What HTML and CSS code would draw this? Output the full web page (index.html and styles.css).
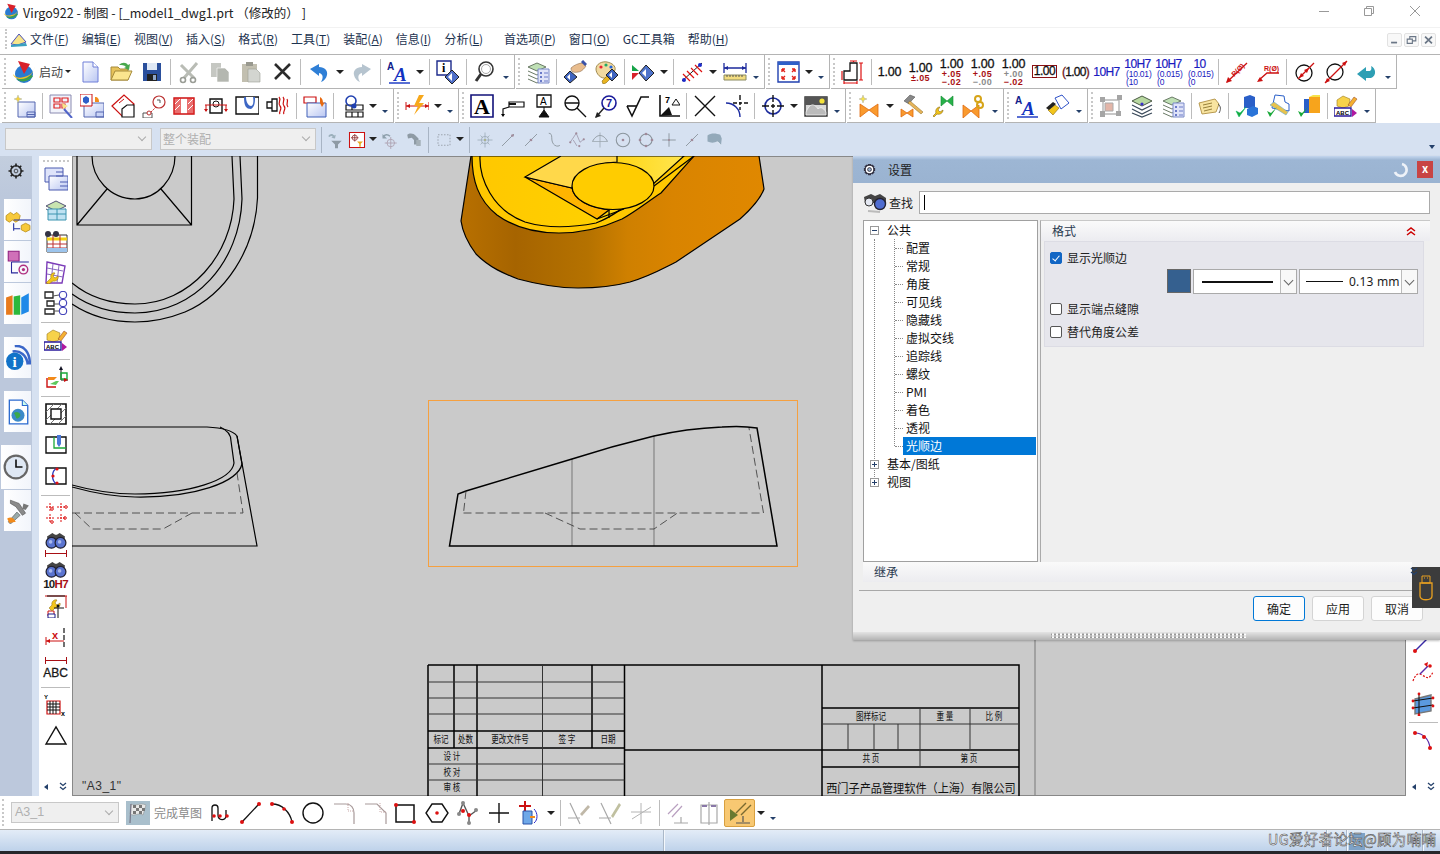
FILE: index.html
```html
<!DOCTYPE html>
<html lang="zh-CN">
<head>
    <meta charset="UTF-8">
    <title>Virgo922 - 制图</title>
    <link rel="stylesheet" href="styles.css">
</head>
<body>
    <!-- icon sprite -->
    <svg class="sprite" xmlns="http://www.w3.org/2000/svg">
        <defs>
            <linearGradient id="gBlue" x1="0" y1="0" x2="1" y2="1"><stop offset="0" stop-color="#fff"/><stop offset="1" stop-color="#b9c6f2"/></linearGradient>
            <linearGradient id="gBody" gradientUnits="userSpaceOnUse" x1="461" y1="0" x2="764" y2="0">
                <stop offset="0" stop-color="#b87000"/><stop offset=".18" stop-color="#a66400"/><stop offset=".42" stop-color="#b57200"/>
                <stop offset=".55" stop-color="#cf8000"/><stop offset=".7" stop-color="#d98400"/><stop offset="1" stop-color="#e08800"/>
            </linearGradient>
            <linearGradient id="gFloor" gradientUnits="userSpaceOnUse" x1="480" y1="0" x2="684" y2="0"><stop offset="0" stop-color="#ffc800"/><stop offset=".55" stop-color="#ffd000"/><stop offset="1" stop-color="#ffe650"/></linearGradient>
        </defs>
        <symbol id="i-logo" viewBox="0 0 24 24"><circle cx="12" cy="14" r="9" fill="#2a7bd0"/><path d="M4 19c5 4 13 3 17-3l-2-1c-4 4-9 5-15 4z" fill="#3aa245"/><path d="M1 14c1 5 8 6 13 4s9-8 8-11c1 5-5 9-10 10-5 2-9 0-11-3z" fill="#f2c318"/><path d="M6 1l12 3-6 10z" fill="#d9202a"/></symbol>
        <symbol id="i-new" viewBox="0 0 24 24"><path d="M5 2h10l5 5v15H5z" fill="url(#gBlue)" stroke="#6f7fd8"/><path d="M15 2v5h5" fill="#fff" stroke="#6f7fd8"/></symbol>
        <symbol id="i-open" viewBox="0 0 24 24"><path d="M2 20V7h7l2 2h8v11z" fill="#e6c25a" stroke="#a58a3a"/><path d="M2 20l4-9h17l-4 9z" fill="#fbe58e" stroke="#a58a3a"/><path d="M10 5c3-3 7-3 9 0l2-1-1 6-5-2 2-1c-2-2-4-2-7-2z" fill="#49a84d"/></symbol>
        <symbol id="i-save" viewBox="0 0 24 24"><path d="M3 3h18v18H3z" fill="#2a4f9c"/><path d="M7 3h10v7H7z" fill="#dfe8f5"/><path d="M7 14h10v7H7z" fill="#222"/><path d="M13 15h3v5h-3z" fill="#8fa6c8"/></symbol>
        <symbol id="i-cut" viewBox="0 0 24 24"><path d="M4 5l13 13M20 3L7 18" stroke="#b9bcb5" stroke-width="3" fill="none"/><circle cx="6" cy="20" r="2.500" fill="none" stroke="#9a9d96" stroke-width="1.600"/><circle cx="16" cy="20" r="2.500" fill="none" stroke="#9a9d96" stroke-width="1.600"/></symbol>
        <symbol id="i-copy" viewBox="0 0 24 24"><path d="M3 3h10v14H3z" fill="#c5c7c2"/><path d="M9 8h8l4 4v10H9z" fill="#b4b7b0" stroke="#fff" stroke-width=".6"/></symbol>
        <symbol id="i-paste" viewBox="0 0 24 24"><path d="M3 4h15v18H3z" fill="#c2bfb0"/><path d="M7 2h7v4H7z" fill="#99998f"/><path d="M9 9h8l4 4v9H9z" fill="#d3d5d0" stroke="#9a9d96" stroke-width=".6"/></symbol>
        <symbol id="i-x" viewBox="0 0 24 24"><path d="M5 4l15 15M20 4L5 19" stroke="#2b2b2b" stroke-width="2.600" fill="none"/></symbol>
        <symbol id="i-undo" viewBox="0 0 24 24"><path d="M3 9l9-5v3c6 0 9 4 8 8-.5 3-3 6-6 7 2-3 3-8-2-9v3z" fill="#2f7fd6"/></symbol>
        <symbol id="i-redo" viewBox="0 0 24 24"><path d="M21 9l-9-5v3C6 7 3 11 4 15c.5 3 3 6 6 7-2-3-3-8 2-9v3z" fill="#b6c4cf"/></symbol>
        <symbol id="i-find" viewBox="0 0 24 24"><circle cx="13" cy="9" r="7" fill="#fff" stroke="#333" stroke-width="1.600"/><circle cx="13" cy="9" r="4.500" fill="none" stroke="#aaa"/><path d="M3 21l5-7" stroke="#333" stroke-width="3"/></symbol>
        <symbol id="i-layers" viewBox="0 0 24 24"><path d="M2 7l9-4 9 4-9 4z" fill="#bfe0b5" stroke="#6a7a66"/><path d="M2 11l9 4 4-2M2 15l9 4 4-2M2 19l9 4 4-2" fill="none" stroke="#6a7a66"/><path d="M12 9h11v14H12z" fill="#dfe3f8" stroke="#7b8ac8"/><path d="M14 12h2v2h-2zM14 16h2v2h-2zM14 20h2v2h-2z" fill="#6a7ac8"/><path d="M18 13h4M18 17h4M18 21h4" stroke="#6a7ac8"/></symbol>
        <symbol id="i-hand" viewBox="0 0 24 24"><path d="M8 8c3-3 8-5 12-5l3 3c-2 3-5 6-8 6-4 1-7 0-7-4z" fill="#e9bd8e" stroke="#8b6a4a" stroke-width=".6"/><path d="M19 1l4 4" stroke="#3a52a8" stroke-width="3"/><path d="M7 11l7 6-7 6-6-6z" fill="#3f64c0" stroke="#222"/><path d="M7 14v6l-3-3z" fill="#fff"/></symbol>
        <symbol id="i-palette" viewBox="0 0 24 24"><path d="M2 9c0-5 6-8 11-7s9 4 8 8c-1 3-4 1-6 2-2 2 0 5-3 6-5 1-10-4-10-9z" fill="#f1d9a0" stroke="#a08a50"/><circle cx="7" cy="7" r="1.600" fill="#e23"/><circle cx="12" cy="5" r="1.600" fill="#2a6"/><circle cx="17" cy="7" r="1.600" fill="#26d"/><path d="M9 24l-1-3 3-3 2-2 3 3-4 4z" fill="#e8b420" stroke="#8a6a10" stroke-width=".6"/><path d="M18 9l6 6-6 6-6-6z" fill="#3f64c0" stroke="#222"/><path d="M18 12v6l-3-3z" fill="#fff"/></symbol>
        <symbol id="i-playd" viewBox="0 0 24 24"><path d="M1 5l7 6-7 0z" fill="#16a348"/><path d="M1 13h7l-7 7z" fill="#d8222a"/><path d="M15 5l8 8-8 8-7-8z" fill="#4f74cc" stroke="#222"/><path d="M15 9v8l-4-4z" fill="#fff"/></symbol>
        <symbol id="i-hatch" viewBox="0 0 24 24"><path d="M2 21L22 3" stroke="#222"/><path d="M3 14l7 7M7 11l7 7M11 8l7 7M15 5l7 7" stroke="#d11" stroke-width="1.200"/><circle cx="4" cy="20" r="2" fill="#1c2ac8"/><circle cx="20" cy="5" r="2" fill="#1c2ac8"/></symbol>
        <symbol id="i-ruler" viewBox="0 0 24 24"><path d="M1 8h22M1 3v10M23 3v10" stroke="#1c2a9c" stroke-width="1.300"/><path d="M1 8l4-2v4zM23 8l-4-2v4z" fill="#1c2a9c"/><path d="M1 15h22v5H1z" fill="#f2dc80" stroke="#8a8a60"/><path d="M4 15v2M7 15v2M10 15v2M13 15v2M16 15v2M19 15v2" stroke="#555"/></symbol>
        <symbol id="i-fit" viewBox="0 0 24 24"><path d="M2 2h21v20H2z" fill="#fff" stroke="#2040b0" stroke-width="1.400"/><path d="M2 2h21v3H2z" fill="#2f60c8"/><path d="M6 9l3 3M19 9l-3 3M6 19l3-3M19 19l-3-3M6 9h3M6 9v3M19 9h-3M19 9v3M6 19h3M6 19v-3M19 19h-3M19 19v-3" stroke="#e2231a" stroke-width="1.400"/></symbol>
        <symbol id="i-step" viewBox="0 0 24 24"><path d="M9 3h7v17H3v-9h6z" fill="none" stroke="#111" stroke-width="1.300"/><path d="M9 1h7M12.500 1v1M20 3v17M18 3h4M18 20h4M3 23h13M3 21v3M16 21v3M1 11v9" stroke="#d11" stroke-width="1.200"/></symbol>
        <symbol id="i-sheet" viewBox="0 0 24 24"><path d="M6 8h17v15H6z" fill="url(#gBlue)" stroke="#5566b0"/><path d="M15 18h8v5h-8zM15 20.500h8" fill="none" stroke="#5566b0"/><path d="M6 1l1 3 3 1-3 1-1 3-1-3-3-1 3-1z" fill="#f7d23a" stroke="#9aa" stroke-width=".4"/></symbol>
        <symbol id="i-views" viewBox="0 0 24 24"><path d="M1 1h21v18H1z" fill="#f1f3fb" stroke="#8a8ab0"/><path d="M5 4h6v4H5zM13 4h6v4h-6zM5 10h6v4H5zM13 10h3v4h-3z" fill="none" stroke="#d22" stroke-width="1.200"/><path d="M15 15l8 9" stroke="#5064c8" stroke-width="2"/><path d="M13 9l6 3-5 3z" fill="#f7e48a"/></symbol>
        <symbol id="i-base" viewBox="0 0 24 24"><path d="M4 9h20v14H4z" fill="url(#gBlue)" stroke="#5566b0"/><path d="M16 18h8v5h-8z" fill="none" stroke="#5566b0"/><path d="M0 0h12v12H0z" fill="#fff" stroke="#c11"/><path d="M3 4l3-2 3 2v4l-3 2-3-2z" fill="#2f5fc8"/><path d="M15 3c3 0 4 2 4 5h-4z" fill="#f28c1a"/></symbol>
        <symbol id="i-detail" viewBox="0 0 24 24"><path d="M1 12L13 1l10 9-12 12z" fill="#fff" stroke="#c11" stroke-width="1.200"/><path d="M11 15l5-4h7v12H11z" fill="#fff" stroke="#111" stroke-width="1.200"/><path d="M8 9l5-4" stroke="#c11"/></symbol>
        <symbol id="i-section" viewBox="0 0 24 24"><path d="M1 19h9v5H1z" fill="#fff" stroke="#555"/><path d="M9 18l8-8" stroke="#c33" stroke-dasharray="2 1"/><circle cx="17" cy="8" r="6" fill="#fff" stroke="#b33" stroke-width="1.200"/><path d="M15 6h3v3" stroke="#555" fill="none"/><circle cx="7" cy="19" r="2" fill="#fff" stroke="#b33"/></symbol>
        <symbol id="i-cut2" viewBox="0 0 24 24"><path d="M1 4h20v16H1z" fill="#fff" stroke="#c11" stroke-width="1.400"/><path d="M1 4h7v16H1zM14 4h7v16h-7z" fill="#d22" opacity=".65"/><path d="M2 10l5-5M2 16l5-5M15 10l5-5M15 16l5-5" stroke="#fff"/></symbol>
        <symbol id="i-half" viewBox="0 0 24 24"><path d="M6 5h12v14H6z" fill="#fff" stroke="#111" stroke-width="1.400"/><circle cx="12" cy="10" r="3" fill="none" stroke="#111"/><path d="M1 11h22M2 11v6M22 11v6" stroke="#c11"/><path d="M0 15l2 3 2-3zM20 15l2 3 2-3z" fill="#c11"/></symbol>
        <symbol id="i-break" viewBox="0 0 24 24"><path d="M1 3h23v17H1z" fill="#fff" stroke="#111" stroke-width="1.400"/><path d="M9 3c0 9 2 12 7 12 4-2 4-8 4-12z" fill="#3c66c4"/><path d="M11 3c0 6 3 9 5 9s3-4 2-9z" fill="#fff"/></symbol>
        <symbol id="i-brk" viewBox="0 0 24 24"><path d="M6 5h5v12H6zM1 8h5v6H1z" fill="#fff" stroke="#111" stroke-width="1.300"/><path d="M13 3c3 3-2 6 1 9s-2 6 0 8M17 3c3 3-2 6 1 9s-2 6 0 8M21 5c2 3-2 5 1 8" fill="none" stroke="#c11" stroke-width="1.200"/></symbol>
        <symbol id="i-move" viewBox="0 0 24 24"><path d="M1 3h12v6H1z" fill="#fff" stroke="#c11" stroke-width="1.200"/><path d="M4 9h19v14H4z" fill="url(#gBlue)" stroke="#4060b8"/><path d="M17 3c2 1 3 3 3 6l2-1-3 5-2-4z" fill="#e86a10"/></symbol>
        <symbol id="i-orient" viewBox="0 0 24 24"><path d="M6 11h17v5H6zM6 18h17v5H6zM12 18v5M18 18v5M12 11v5" fill="#fff" stroke="#111" stroke-width="1.200"/><circle cx="11" cy="7" r="5" fill="none" stroke="#2040b0" stroke-width="1.600"/><circle cx="14" cy="12" r="2.500" fill="#2040b0"/></symbol>
        <symbol id="i-dimq" viewBox="0 0 24 24"><path d="M1 12h23M1 8v8M24 8v8" stroke="#c11"/><path d="M1 12l4-2v4zM24 12l-4-2v4z" fill="#c11"/><path d="M14 1l-5 11h4l-4 9 10-12h-5l5-8z" fill="#f7a81c"/></symbol>
        <symbol id="i-weld" viewBox="0 0 24 24"><path d="M8 8h15v5H8z" fill="#fff" stroke="#111" stroke-width="1.200"/><path d="M8 10h7" stroke="#111" stroke-width="2"/><path d="M8 13l-6 2v6" fill="none" stroke="#111" stroke-width="1.200"/><path d="M0 20l2 3 2-3z"/></symbol>
        <symbol id="i-target" viewBox="0 0 24 24"><circle cx="9" cy="9" r="7" fill="#fff" stroke="#111" stroke-width="1.400"/><path d="M2 9h14M14 14l9 9" stroke="#111" stroke-width="1.400"/></symbol>
        <symbol id="i-rough" viewBox="0 0 24 24"><path d="M2 12l5 10L16 3h8" fill="none" stroke="#111" stroke-width="1.600"/><path d="M2 12h10" stroke="#111" stroke-width="1.600"/></symbol>
        <symbol id="i-cross" viewBox="0 0 24 24"><path d="M2 2l20 20M22 2L2 22" stroke="#111" stroke-width="1.400"/></symbol>
        <symbol id="i-centre" viewBox="0 0 24 24"><path d="M2 9c8 0 14 6 14 14" fill="none" stroke="#1a2aa0" stroke-width="1.400"/><path d="M16 1v5M16 8v3M16 13v3M9 9h4M15 9h3M20 9h4" stroke="#111" stroke-width="1.400"/></symbol>
        <symbol id="i-cross2" viewBox="0 0 24 24"><circle cx="12" cy="12" r="8" fill="none" stroke="#1a2a9c" stroke-width="1.600"/><path d="M12 1v7M12 10v4M12 16v7M1 12h7M10 12h4M16 12h7" stroke="#111" stroke-width="1.400"/></symbol>
        <symbol id="i-image" viewBox="0 0 24 24"><path d="M1 3h22v19H1z" fill="#d8d8d8" stroke="#333" stroke-width="1.400"/><path d="M1 3h22v8H1z" fill="#555"/><circle cx="18" cy="7" r="2.600" fill="#f4e23a"/><path d="M2 18c4-9 8-9 12-3 2-2 5-2 8 3v3H2z" fill="#bbb" stroke="#fff" stroke-width=".6"/></symbol>
        <symbol id="i-bow" viewBox="0 0 24 24"><path d="M3 10l9 6-9 7zM21 10l-9 6 9 7z" fill="#f99a2e" stroke="#e06a10" stroke-width=".8"/><path d="M6 1l1 3 3 1-3 1-1 3-1-3-3-1 3-1z" fill="#f7e34a" stroke="#999" stroke-width=".4"/></symbol>
        <symbol id="i-hammer" viewBox="0 0 24 24"><path d="M1 15l6 4-6 4zM13 15l-6 4 6 4z" fill="#f99a2e" stroke="#e06a10" stroke-width=".8"/><path d="M4 7l6-6 5 2-3 3-3 4z" fill="#888" stroke="#444" stroke-width=".5"/><path d="M10 7l13 11-2 2L8 9z" fill="#e6b45a" stroke="#8a6a20" stroke-width=".5"/></symbol>
        <symbol id="i-wrench" viewBox="0 0 24 24"><path d="M10 2l6 5 6-5v10l-6-5-6 5z" fill="#27b14a" stroke="#138a30" stroke-width=".6"/><path d="M2 22l3-3c-1-3 1-6 4-6l-2 3 2 2 3-2c0 3-3 5-6 4l-3 3z" fill="#f2c51c" stroke="#8a6a10" stroke-width=".6"/></symbol>
        <symbol id="i-bowk" viewBox="0 0 24 24"><path d="M1 11l8 6-8 7zM17 11l-8 6 8 7z" fill="#f99a2e" stroke="#e06a10" stroke-width=".8"/><circle cx="16" cy="5" r="3" fill="none" stroke="#d6a418" stroke-width="2"/><circle cx="18" cy="11" r="3" fill="none" stroke="#d6a418" stroke-width="2"/></symbol>
        <symbol id="i-txtw" viewBox="0 0 24 24"><path d="M2 16l7-5 4 3-6 7z" fill="#f2c51c" stroke="#8a6a10" stroke-width=".6"/><path d="M9 4l7-3 7 8-8 6z" fill="#fff" stroke="#2f52c8"/><path d="M0 14l7-6 3 2-7 6z" fill="#222"/></symbol>
        <symbol id="i-gridg" viewBox="0 0 24 24"><path d="M4 6h16v14H4z" fill="none" stroke="#b5b5b5" stroke-width="1.400"/><path d="M6 9h8v8H6z" fill="#e3b5a8" stroke="#aaa"/><path d="M1 17h5v6H1zM18 1h5v5h-5zM1 3h5v5H1zM17 17h5v5h-5z" fill="#a5a5a5"/></symbol>
        <symbol id="i-stack" viewBox="0 0 24 24"><path d="M2 7l10-5 10 5-10 5z" fill="#b8d8a0" stroke="#4a5a44"/><path d="M2 11l10 5 10-5M2 15l10 5 10-5M2 19l10 4 10-4" fill="none" stroke="#3a4a5a" stroke-width="1.200"/><circle cx="12" cy="10" r="1.600" fill="#3a30c8"/></symbol>
        <symbol id="i-tag" viewBox="0 0 24 24"><path d="M1 9l16-4 4 5-3 8-14 2z" fill="#f8e4a0" stroke="#b89a50"/><path d="M5 11l9-2M5 14l9-2M6 17l8-2" stroke="#97803a"/><path d="M20 10c3 2 3 6 1 9" fill="none" stroke="#555"/></symbol>
        <symbol id="i-chk1" viewBox="0 0 24 24"><path d="M9 3l6-2 5 2v11h-11z" fill="#2a5fc8"/><path d="M12 15l6-3 5 2v6l-6 3-5-2z" fill="#2a74d8"/><path d="M1 17l3 6 7-10-6 6z" fill="#18a838" stroke="#0b6" stroke-width=".5"/></symbol>
        <symbol id="i-chk2" viewBox="0 0 24 24"><path d="M9 1l9 1 1 6 4 2v7L6 14z" fill="#fff" stroke="#2a5fc8"/><path d="M4 11l4-3 14 10-2 3z" fill="#e8c24c" stroke="#6ac" stroke-width=".6"/><path d="M1 17l3 6 7-10-6 6z" fill="#18a838"/></symbol>
        <symbol id="i-chk3" viewBox="0 0 24 24"><path d="M7 5h8v14H7z" fill="#2a5fc8"/><path d="M12 3h11v16H12z" fill="#f7a41c"/><path d="M12 3l4-2h7v2z" fill="#f7e34a"/><path d="M1 17l3 6 7-10-6 6z" fill="#18a838"/></symbol>
        <symbol id="i-filter" viewBox="0 0 24 24"><path d="M3 7c2-4 6-4 8-1l2-1-1 5-5-1 2-1c-1-2-3-2-4 0z" fill="#9cb0bc"/><path d="M7 13h14l-5 5v5h-4v-5z" fill="#8e9aa4"/></symbol>
        <symbol id="i-filterr" viewBox="0 0 24 24"><path d="M2 2h20v20H2z" fill="#fff" stroke="#c11" stroke-width="1.400"/><circle cx="9" cy="9" r="3.500" fill="none" stroke="#822"/><path d="M9 4v10M4 9h10" stroke="#822"/><path d="M12 14h8l-3 3v4h-2v-4z" fill="#e8a820"/></symbol>
        <symbol id="i-fback" viewBox="0 0 24 24"><path d="M3 8c2-4 6-4 9-1" fill="none" stroke="#8ea0ac" stroke-width="2"/><path d="M2 4v6h6z" fill="#8ea0ac"/><circle cx="13" cy="16" r="5" fill="none" stroke="#a899a8"/><path d="M13 8v16M5 16h16" stroke="#a899a8"/></symbol>
        <symbol id="i-boot" viewBox="0 0 24 24"><path d="M3 5c3-3 9-2 11 1l4 4v8h-6v-6l-3-3-5 1z" fill="#8e9aa4"/><path d="M15 12h6v8h-6z" fill="#a5b0b8"/></symbol>
        <symbol id="i-rect" viewBox="0 0 24 24"><path d="M4 5h16v14H4z" fill="none" stroke="#8a9098" stroke-dasharray="2 2"/></symbol>
        <symbol id="i-snapc" viewBox="0 0 24 24"><circle cx="12" cy="12" r="5" fill="none" stroke="#9aa8b4"/><path d="M12 2v20M2 12h20M6 6l3 3M18 6l-3 3M6 18l3-3M18 18l-3-3" stroke="#9aa8b4"/><circle cx="12" cy="12" r="1.400" fill="#a8b080"/></symbol>
        <symbol id="i-snapl" viewBox="0 0 24 24"><path d="M4 20L20 4" stroke="#8a949c" stroke-width="1.200"/><circle cx="18" cy="6" r="1.800" fill="#a08a9a"/></symbol>
        <symbol id="i-snapm" viewBox="0 0 24 24"><path d="M4 20L20 4" stroke="#8a949c" stroke-width="1.200"/><circle cx="12" cy="12" r="1.800" fill="#a08a9a"/></symbol>
        <symbol id="i-snaps" viewBox="0 0 24 24"><path d="M5 3c3 0 4 2 4 6s1 8 4 10 6 1 7 0" fill="none" stroke="#8a949c" stroke-width="1.200"/></symbol>
        <symbol id="i-snapp" viewBox="0 0 24 24"><path d="M3 15L11 3l5 12 5-4" fill="none" stroke="#9a90a4"/><path d="M7 12l5 8" stroke="#9a90a4"/><circle cx="11" cy="3" r="1.500" fill="#a08a9a"/><circle cx="3" cy="15" r="1.500" fill="#a08a9a"/><circle cx="21" cy="11" r="1.500" fill="#a08a9a"/><circle cx="15" cy="20" r="1.500" fill="#a08a9a"/></symbol>
        <symbol id="i-snapa" viewBox="0 0 24 24"><path d="M2 14c3-6 7-8 10-8s7 2 10 8" fill="none" stroke="#8a949c" stroke-width="1.200"/><path d="M12 2v20M2 14h20" stroke="#9aa4ac"/></symbol>
        <symbol id="i-snapo" viewBox="0 0 24 24"><circle cx="12" cy="12" r="9" fill="none" stroke="#8a949c" stroke-width="1.400"/><circle cx="12" cy="12" r="1.800" fill="#a08a9a"/></symbol>
        <symbol id="i-snapq" viewBox="0 0 24 24"><circle cx="12" cy="12" r="8" fill="none" stroke="#8a949c" stroke-width="1.400"/><circle cx="12" cy="4" r="1.800" fill="#a08a9a"/><circle cx="12" cy="20" r="1.800" fill="#a08a9a"/><circle cx="4" cy="12" r="1.800" fill="#a08a9a"/><circle cx="20" cy="12" r="1.800" fill="#a08a9a"/></symbol>
        <symbol id="i-snapx" viewBox="0 0 24 24"><path d="M12 3v18M3 12h18" stroke="#8a949c" stroke-width="1.200"/><circle cx="12" cy="12" r="1.400" fill="#a08a9a"/></symbol>
        <symbol id="i-snapf" viewBox="0 0 24 24"><path d="M2 6c5-4 12-3 17-1l2 5-1 9c-2-3-3-4-5-5-4 2-9 2-13 0z" fill="#93a9ba"/><path d="M15 14l5 5" stroke="#e8eef4"/></symbol>
        <symbol id="i-dia" viewBox="0 0 24 24"><circle cx="11" cy="13" r="8" fill="none" stroke="#111" stroke-width="1.300"/><path d="M5 19L21 3" stroke="#c11" stroke-width="1.200"/><path d="M6 18l5-2-3-3zM16 8l-5 2 3 3z" fill="#c11"/></symbol>
        <symbol id="i-dia2" viewBox="0 0 24 24"><circle cx="11" cy="12" r="8" fill="none" stroke="#111" stroke-width="1.300"/><path d="M1 23L23 1" stroke="#c11" stroke-width="1.200"/><path d="M1 23l5-2-3-3zM23 1l-5 2 3 3z" fill="#c11"/></symbol>
        <symbol id="i-teal" viewBox="0 0 24 24"><path d="M2 14l9-7v4h3c2 0 3-2 2-5 5 2 6 10 0 12h-5v3z" fill="#2e9fb4"/></symbol>
        <symbol id="l-views" viewBox="0 0 24 24"><path d="M1 1h18v14H1z" fill="#dfe4fa" stroke="#4a5ab0"/><path d="M5 9h19v14H5z" fill="url(#gBlue)" stroke="#4a5ab0"/><path d="M12 5h7M12 9h7M16 15h8M16 19h8" stroke="#4a5ab0"/></symbol>
        <symbol id="l-layer" viewBox="0 0 24 24"><path d="M2 8l10-5 10 5-10 5z" fill="#c8e4b0" stroke="#557"/><path d="M2 11l10 5 10-5" fill="none" stroke="#557"/><path d="M4 11h18v11H4z" fill="#bfe2f2" stroke="#3a94b0"/><path d="M13 11v11M4 16h18" stroke="#3a94b0"/></symbol>
        <symbol id="l-table" viewBox="0 0 24 24"><path d="M3 6h20v17H3z" fill="#fff" stroke="#333"/><path d="M3 10h20" stroke="#f4d010" stroke-width="3"/><path d="M3 15h20M3 19h20M9 6v17M16 6v17" stroke="#b33"/><path d="M3 19h20v4H3z" fill="#9cc4ec"/><circle cx="4" cy="5" r="3" fill="#334"/><circle cx="12" cy="5" r="3" fill="#334"/></symbol>
        <symbol id="l-wrench" viewBox="0 0 24 24"><path d="M3 2l18 4-3 17H2z" fill="#fff" stroke="#7b3bb8" stroke-width="1.400"/><path d="M3 8l16 3M3 14l16 3M9 4L7 22M15 5l-2 18" stroke="#8a6ac0"/><path d="M2 23l5-5c-1-3 1-6 4-5l-2 3 2 2 3-2c1 3-2 6-5 5l-4 3z" fill="#f2c51c" stroke="#8a6a10" stroke-width=".5"/></symbol>
        <symbol id="l-list" viewBox="0 0 24 24"><path d="M1 1h8v6H1zM3 10h7v5H3zM1 18h9v5H1z" fill="none" stroke="#222" stroke-width="1.300"/><circle cx="19" cy="4" r="3.800" fill="#fff" stroke="#2a2ab0"/><circle cx="19" cy="12" r="3.800" fill="#fff" stroke="#2a2ab0"/><circle cx="19" cy="20" r="3.800" fill="#fff" stroke="#2a2ab0"/><path d="M9 5l6-1M10 13h5M10 20h5" stroke="#555"/></symbol>
        <symbol id="l-axes" viewBox="0 0 24 24"><path d="M17 3v12h7" fill="none" stroke="#111"/><path d="M17 1l-2 4h4z" fill="#112"/><path d="M17 8h6v6h-6z" fill="none" stroke="#18a838" stroke-width="1.400"/><path d="M4 12h9l-3 3H4z" fill="#f28a1a"/><path d="M3 13v9h9" fill="none" stroke="#c11" stroke-width="1.400"/><path d="M6 19l6-3h3l-3 4z" fill="#5cc85c"/><path d="M24 15l-4-2v4z" fill="#c11"/></symbol>
        <symbol id="l-cut" viewBox="0 0 24 24"><path d="M2 2h20v20H2z" fill="#fff" stroke="#111" stroke-width="1.600"/><path d="M2 10l8-8M2 18L18 2M6 22L22 6M14 22l8-8" stroke="#777"/><path d="M7 7h10v10H7z" fill="#fff" stroke="#111" stroke-width="1.400"/></symbol>
        <symbol id="l-slot" viewBox="0 0 24 24"><path d="M2 4h20v16H2z" fill="#fff" stroke="#111" stroke-width="1.400"/><path d="M10 4v11h12" fill="none" stroke="#18a838" stroke-width="1.300"/><path d="M13 2h4v9l-2 3-2-3z" fill="#4a78d8"/></symbol>
        <symbol id="l-curve" viewBox="0 0 24 24"><path d="M2 4h20v16H2z" fill="#fff" stroke="#111" stroke-width="1.400"/><path d="M13 4c-6 3-6 13 0 16" fill="none" stroke="#2a3ac0" stroke-width="1.300"/><circle cx="13" cy="5" r="1.600" fill="#d11"/><circle cx="9" cy="12" r="1.600" fill="#d11"/><circle cx="13" cy="19" r="1.600" fill="#d11"/></symbol>
        <symbol id="l-pat" viewBox="0 0 24 24"><path d="M6 2v8M2 6h8M17 2v8M13 6h8M6 13v8M2 17h8M17 13v8M13 17h8" stroke="#d11" stroke-dasharray="2 1"/><circle cx="8" cy="8" r="1.300" fill="none" stroke="#d11"/><circle cx="22" cy="6" r="1.300" fill="none" stroke="#d11"/><circle cx="8" cy="21" r="1.300" fill="none" stroke="#d11"/><circle cx="21" cy="17" r="1.300" fill="none" stroke="#d11"/></symbol>
        <symbol id="l-bino" viewBox="0 0 24 20"><path d="M2 5l6-4 3 2h2l3-2 6 4-1 5H3z" fill="#444"/><circle cx="7" cy="12" r="6" fill="#5a74d0" stroke="#223" stroke-width="1.400"/><circle cx="17" cy="12" r="6" fill="#5a74d0" stroke="#223" stroke-width="1.400"/><circle cx="6" cy="11" r="2" fill="#a9b8ec"/><circle cx="16" cy="11" r="2" fill="#a9b8ec"/></symbol>
        <symbol id="l-wrdim" viewBox="0 0 24 24"><path d="M1 2h22M22 2v12M4 22h6V17H4z" fill="none" stroke="#c11"/><path d="M3 2h18" stroke="#111"/><path d="M4 20h7v4H4z" fill="#fff" stroke="#1a1a8a"/><path d="M5 14l3-3c-1-3 2-6 5-5l-2 3 2 2 3-2c1 3-2 5-5 5l-3 3z" fill="#f2c51c" stroke="#8a6a10" stroke-width=".5"/><path d="M14 14v10M10 14h10" stroke="#111"/><circle cx="14" cy="12" r="1.500" fill="#111"/></symbol>
        <symbol id="l-tri" viewBox="0 0 24 24"><path d="M2 20L12 3l10 17z" fill="none" stroke="#111" stroke-width="1.400"/></symbol>
        <symbol id="d-struct" viewBox="0 0 24 24"><path d="M1 8l4-3 3 2 3-2 3 3-1 4-3 2-3-2-3 2-3-2z" fill="#f7c93a" stroke="#b58a10" stroke-width=".7"/><path d="M15 17l4-2 4 2v4l-4 2-4-2z" fill="#f7c93a" stroke="#b58a10" stroke-width=".7"/><path d="M8 15v7M8 12h16M8 20h6" stroke="#2030a0" fill="none"/></symbol>
        <symbol id="d-db" viewBox="0 0 24 24"><path d="M3 2h10v9H3z" fill="#d070b8" stroke="#902080"/><path d="M6 12v10h6M6 12h16" stroke="#2a2a9c" fill="none"/><circle cx="17" cy="19" r="4" fill="none" stroke="#b03080" stroke-width="1.300"/><circle cx="17" cy="19" r="1.500" fill="#b03080"/></symbol>
        <symbol id="d-books" viewBox="0 0 24 24"><path d="M1 6l6-2v18H1z" fill="#e87a1c"/><path d="M8 5l6-1v18H8z" fill="#2cb83c"/><path d="M15 6l7-4v17l-7 3z" fill="#1f8ae8"/></symbol>
        <symbol id="d-web" viewBox="0 0 24 24"><path d="M4 1h12l5 5v17H4z" fill="#fff" stroke="#2a6ad0" stroke-width="1.200"/><path d="M16 1v5h5" fill="#cfe" stroke="#2a6ad0"/><circle cx="12" cy="15" r="6" fill="#3c8ac8"/><path d="M8 13c3-2 5-1 6 1s-2 4-3 4-1-3-3-5z" fill="#3ca84c"/></symbol>
        <symbol id="d-clock" viewBox="0 0 24 24"><circle cx="12" cy="12" r="10.500" fill="#dfe8f4" stroke="#666" stroke-width="2"/><path d="M12 5v7h6" fill="none" stroke="#111" stroke-width="1.500"/></symbol>
        <symbol id="d-tools" viewBox="0 0 24 24"><path d="M5 2l8 3 6 9-3 2-6-8-5-3z" fill="#8a8a8a" stroke="#444" stroke-width=".5"/><path d="M3 22l8-9 3 3-9 8z" fill="#9aa" stroke="#444" stroke-width=".5"/><path d="M2 19c3-2 6-1 8 3l-6 1z" fill="#f28a1a"/><path d="M17 5l5 2-3 4-3-1z" fill="#777"/></symbol>
        <symbol id="c-gear" viewBox="0 0 24 24"><circle cx="12" cy="12" r="7" fill="none" stroke="#222" stroke-width="2"/><circle cx="12" cy="12" r="2.500" fill="none" stroke="#222"/><path d="M12 2v4M12 18v4M2 12h4M18 12h4M5 5l3 3M16 16l3 3M19 5l-3 3M8 16l-3 3" stroke="#222" stroke-width="2.200"/></symbol>
        <symbol id="b-profile" viewBox="0 0 24 24"><path d="M4 20V7c0-4 6-4 6 0v7c0 6 8 6 8 1V9" fill="none" stroke="#111" stroke-width="1.300"/><circle cx="6" cy="15" r="1.800" fill="#d11"/><circle cx="12" cy="15" r="1.800" fill="#d11"/><circle cx="19" cy="15" r="1.800" fill="#d11"/></symbol>
        <symbol id="b-line" viewBox="0 0 24 24"><path d="M3 21L20 3" stroke="#111" stroke-width="1.300"/><circle cx="3" cy="21" r="2" fill="#d11"/><circle cx="20" cy="3" r="2" fill="#d11"/></symbol>
        <symbol id="b-arc" viewBox="0 0 24 24"><path d="M2 3c10 0 18 8 20 18" fill="none" stroke="#111" stroke-width="1.300"/><circle cx="2" cy="3" r="2" fill="#d11"/><circle cx="14" cy="8" r="1.800" fill="#d11"/><circle cx="22" cy="21" r="2" fill="#d11"/></symbol>
        <symbol id="b-circle" viewBox="0 0 24 24"><circle cx="12" cy="12" r="10" fill="none" stroke="#111" stroke-width="1.400"/></symbol>
        <symbol id="b-fillet" viewBox="0 0 24 24"><path d="M2 3h12c5 0 8 4 8 9v11" fill="none" stroke="#a89a9a" stroke-width="1.200"/><path d="M16 2v8h6" fill="none" stroke="#c8a8a8" stroke-dasharray="1 1"/></symbol>
        <symbol id="b-chamfer" viewBox="0 0 24 24"><path d="M2 3h12l9 9v11" fill="none" stroke="#a89a9a" stroke-width="1.200"/><path d="M17 2v9h6" fill="none" stroke="#c8a8a8" stroke-dasharray="1 1"/></symbol>
        <symbol id="b-rect" viewBox="0 0 24 24"><path d="M2 4h18v17H2z" fill="none" stroke="#111" stroke-width="1.500"/><circle cx="2" cy="4" r="2" fill="#d11"/><circle cx="20" cy="21" r="2" fill="#d11"/></symbol>
        <symbol id="b-hex" viewBox="0 0 24 24"><path d="M7 3h10l6 9-6 9H7l-6-9z" fill="none" stroke="#111" stroke-width="1.400"/><circle cx="12" cy="12" r="1.800" fill="#d11"/></symbol>
        <symbol id="b-spline" viewBox="0 0 24 24"><path d="M3 13L7 2l6 13 8-6M13 15l0 7" fill="none" stroke="#555" stroke-width="1.400"/><circle cx="7" cy="10" r="2" fill="#d11"/><circle cx="13" cy="14" r="2" fill="#d11"/><circle cx="20" cy="9" r="2" fill="#888"/><circle cx="3" cy="13" r="2" fill="#888"/><circle cx="7" cy="2" r="2" fill="#888"/><circle cx="13" cy="22" r="2" fill="#888"/></symbol>
        <symbol id="b-plus" viewBox="0 0 24 24"><path d="M12 2v20M2 12h20" stroke="#111" stroke-width="1.400"/></symbol>
        <symbol id="b-offset" viewBox="0 0 24 24"><path d="M1 5h12M7 0v10" stroke="#c11" stroke-width="2"/><path d="M5 10h9v13H5z" fill="#6fa8e8" stroke="#2a52a8"/><path d="M16 8c4 4 4 11 0 14" fill="none" stroke="#2a2ac8"/><path d="M12 16h5" stroke="#f28a1a" stroke-width="2"/></symbol>
        <symbol id="b-trim1" viewBox="0 0 24 24"><path d="M3 2l10 21M1 17h12" stroke="#a8a8a8" stroke-width="1.200"/><path d="M13 13l8-9 2 2-8 9z" fill="#c0b8a8"/></symbol>
        <symbol id="b-trim2" viewBox="0 0 24 24"><path d="M3 2l10 21M1 17h12" stroke="#a8a8a8" stroke-width="1.200"/><path d="M13 15l8-13 2 2-8 13z" fill="#c0c0a0"/></symbol>
        <symbol id="b-trim3" viewBox="0 0 24 24"><path d="M12 2v21M2 11h20M3 18L22 6" stroke="#b4b4b4"/></symbol>
        <symbol id="b-par" viewBox="0 0 24 24"><path d="M2 13L12 3M6 16L16 5" stroke="#b9a0c0" stroke-width="1.200"/><path d="M15 16v6M8 22h14" stroke="#a8a8a8" stroke-width="1.200"/></symbol>
        <symbol id="b-sym" viewBox="0 0 24 24"><path d="M4 4h16v18H4zM12 1v24" fill="none" stroke="#a8a8a8" stroke-width="1.200"/><path d="M5 5h5M19 5h-5" stroke="#8a78a8" stroke-width="2"/></symbol>
        <symbol id="b-active" viewBox="0 0 24 24"><path d="M2 8l8 6-8 6z" fill="#6a7a30"/><path d="M8 12L18 2M13 14L23 4" stroke="#7a6a30" stroke-width="1.400"/><path d="M15 15v6M8 22h14" stroke="#555" stroke-width="1.200"/></symbol>
        <symbol id="r-dash" viewBox="0 0 24 24"><path d="M2 20c2-5 4-9 9-6s7 5 11-3" fill="none" stroke="#d11" stroke-width="1.200" stroke-dasharray="2 1.500"/><path d="M9 13l8-8" stroke="#5a2aa8" stroke-width="1.400"/><path d="M13 3l4-2-1 5z" fill="#d11"/><circle cx="19" cy="5" r="1.800" fill="#d11"/></symbol>
        <symbol id="r-line" viewBox="0 0 24 24"><path d="M4 21L17 8" stroke="#3a2aa8" stroke-width="1.400"/><path d="M1 6c4 3 8 4 12 3M17 6c2 2 3 3 6 2" fill="none" stroke="#d11" stroke-width="1.200" stroke-dasharray="2 1.500"/><circle cx="4" cy="21" r="2" fill="#d11"/></symbol>
        <symbol id="r-surf" viewBox="0 0 24 24"><path d="M4 7l16-4v16L4 22z" fill="#5b9ae0" stroke="#777" stroke-width="1.400"/><path d="M2 9l20-3M2 16l20-3M8 2v21" stroke="#111"/><circle cx="2" cy="9" r="1.400" fill="#d11"/><circle cx="22" cy="6" r="1.400" fill="#d11"/><circle cx="2" cy="16" r="1.400" fill="#d11"/><circle cx="22" cy="14" r="1.400" fill="#d11"/><circle cx="8" cy="2" r="1.400" fill="#d11"/><circle cx="8" cy="23" r="1.400" fill="#d11"/></symbol>
        <symbol id="r-arc" viewBox="0 0 24 24"><path d="M4 4c8 0 14 6 15 15" fill="none" stroke="#5a2aa8" stroke-width="1.200"/><circle cx="4" cy="4" r="2" fill="#d11"/><circle cx="13" cy="8" r="2" fill="#d11"/><circle cx="19" cy="19" r="2" fill="#d11"/></symbol>
        <symbol id="s-flag" viewBox="0 0 24 24"><path d="M0 0h24v24H0z" fill="#a9bfcc"/><path d="M5 3c5 3 9-2 15 1l-3 10c-5-3-8 2-13-1z" fill="#e8e8e8" stroke="#888" stroke-width=".5"/><path d="M7 4h3v3H7zM13 4h3v3h-3zM10 7h3v3h-3zM16 7h3v3h-3zM7 10h3v3H7zM13 10h3v3h-3z" fill="#777"/><path d="M5 3l-1 19" stroke="#778" stroke-width="1.200"/></symbol>
        <symbol id="e-bino" viewBox="0 0 24 24"><path d="M1 6l7-3 4 2 5-2 6 4v5H2z" fill="#444"/><circle cx="6" cy="11" r="4" fill="#e4e8f2" stroke="#333"/><circle cx="17" cy="13" r="5.500" fill="#4f6cd0" stroke="#223" stroke-width="1.400"/><path d="M5 20l12 1" stroke="#bbb" stroke-width="2"/></symbol>
        <symbol id="v-more" viewBox="0 0 8 10"><path d="M1 1l3 2.500L7 1M1 5l3 2.500L7 5" fill="none" stroke="#24406a" stroke-width="1.300"/></symbol>
    </svg>

    <div class="titlebar">
        <svg class="app-ic"><use href="#i-logo"/></svg>
        <span class="title-text">Virgo922 - 制图 - [_model1_dwg1.prt （修改的） ]</span>
        <div class="win-ctrls">
            <svg class="wc" viewBox="0 0 45 27"><path d="M17 12.500h10" stroke="#999" fill="none"/></svg>
            <svg class="wc" viewBox="0 0 45 27"><path d="M16.500 9.500h7v7h-7zM18.500 9.500v-2h7v7h-2" stroke="#999" fill="none"/></svg>
            <svg class="wc" viewBox="0 0 45 27"><path d="M16 7l10 10M26 7L16 17" stroke="#999" fill="none"/></svg>
        </div>
    </div>

    <div class="menubar">
        <span class="grip mini"></span>
        <svg class="menu-ic" viewBox="0 0 18 18"><path d="M1 13L9 3l7 8-8 3z" fill="#f7e48a" stroke="#4a52b8"/><path d="M1 14l15-2 1 3-16 1z" fill="#3aa0c0"/></svg>
        <div class="menu-items">
            <span>文件(<u>F</u>)</span><span>编辑(<u>E</u>)</span><span>视图(<u>V</u>)</span><span>插入(<u>S</u>)</span><span>格式(<u>R</u>)</span><span>工具(<u>T</u>)</span><span>装配(<u>A</u>)</span><span>信息(<u>I</u>)</span><span>分析(<u>L</u>)</span><span class="far">首选项(<u>P</u>)</span><span>窗口(<u>O</u>)</span><span>GC工具箱</span><span>帮助(<u>H</u>)</span>
        </div>
        <div class="mdi-btns">
            <span class="mdi"><svg viewBox="0 0 14 14"><path d="M3 10h7" stroke="#6a7686" stroke-width="2"/></svg></span>
            <span class="mdi"><svg viewBox="0 0 14 14"><path d="M2 6h6v5H2zM5 6V3h7v5H8" fill="none" stroke="#6a7686" stroke-width="1.300"/></svg></span>
            <span class="mdi"><svg viewBox="0 0 14 14"><path d="M3 3l8 8M11 3l-8 8" stroke="#6a7686" stroke-width="2"/></svg></span>
        </div>
    </div>

    <!-- top toolbar 1 -->
    <div class="toolrow">
        <div class="tgroup first">
            <span class="grip"></span>
            <span class="btn"><svg class="ic"><use href="#i-logo"/></svg></span>
            <span class="start">启动<i class="tri"></i></span>
            <span class="btn"><svg class="ic"><use href="#i-new"/></svg></span>
            <span class="btn"><svg class="ic"><use href="#i-open"/></svg></span>
            <span class="btn"><svg class="ic"><use href="#i-save"/></svg></span>
            <span class="sep"></span>
            <span class="btn"><svg class="ic"><use href="#i-cut"/></svg></span>
            <span class="btn"><svg class="ic"><use href="#i-copy"/></svg></span>
            <span class="btn"><svg class="ic"><use href="#i-paste"/></svg></span>
            <span class="btn"><svg class="ic"><use href="#i-x"/></svg></span>
            <span class="sep"></span>
            <span class="btn"><svg class="ic"><use href="#i-undo"/></svg></span>
            <span class="caret"></span>
            <span class="btn"><svg class="ic"><use href="#i-redo"/></svg></span>
            <span class="sep"></span>
            <span class="btn"><svg class="ic" viewBox="0 0 24 24"><text x="0" y="10" font-family="Liberation Sans" font-size="10" font-weight="700" fill="#10208a">A</text><text x="7" y="21" font-family="Liberation Serif" font-size="19" font-weight="700" font-style="italic" fill="#1232c0">A</text><path d="M2 23h21" stroke="#1232c0" stroke-width="1.400"/></svg></span>
            <span class="caret"></span>
            <span class="sep"></span>
            <span class="btn"><svg class="ic" viewBox="0 0 24 24"><path d="M1 1h14v14H1z" fill="#fff" stroke="#1c2a8c" stroke-width="1.400"/><text x="6" y="12" font-family="Liberation Serif" font-size="12" font-weight="700" fill="#000">i</text><path d="M16 10l7 7-7 7-7-7z" fill="#4f6fc8" stroke="#222"/><path d="M16 13v8l-4-4z" fill="#fff"/></svg></span>
            <span class="sep"></span>
            <span class="btn"><svg class="ic"><use href="#i-find"/></svg></span>
            <span class="caret sm"></span>
        </div>
        <div class="tgroup">
            <span class="grip"></span>
            <span class="btn"><svg class="ic"><use href="#i-layers"/></svg></span>
            <span class="sep"></span>
            <span class="btn"><svg class="ic"><use href="#i-hand"/></svg></span>
            <span class="btn"><svg class="ic"><use href="#i-palette"/></svg></span>
            <span class="sep"></span>
            <span class="btn"><svg class="ic"><use href="#i-playd"/></svg></span>
            <span class="caret"></span>
            <span class="sep"></span>
            <span class="btn"><svg class="ic"><use href="#i-hatch"/></svg></span>
            <span class="caret"></span>
            <span class="btn"><svg class="ic"><use href="#i-ruler"/></svg></span>
            <span class="caret sm"></span>
        </div>
        <div class="tgroup">
            <span class="grip"></span>
            <span class="btn"><svg class="ic"><use href="#i-fit"/></svg></span>
            <span class="caret"></span>
            <span class="caret sm"></span>
        </div>
        <div class="tgroup">
            <span class="grip"></span>
            <span class="btn"><svg class="ic"><use href="#i-step"/></svg></span>
            <span class="sep"></span>
            <span class="btn dim"><b>1.00</b></span>
            <span class="btn dim"><b>1.00</b><em class="red">±.05</em></span>
            <span class="btn dim"><b>1.00</b><em class="red">+.05</em><em class="red">−.02</em></span>
            <span class="btn dim"><b>1.00</b><em class="red">+.05</em><em class="gray">−.00</em></span>
            <span class="btn dim"><b>1.00</b><em class="gray">+.00</em><em class="red">−.02</em></span>
            <span class="btn dim"><b class="boxed">1.00</b></span>
            <span class="btn dim"><b class="paren"><s class="red">(</s>1.00<s class="red">)</s></b></span>
            <span class="btn dim blue"><b>10H7</b></span>
            <span class="btn dim blue"><b>10H7</b><em>(10.01)</em><em>(10</em></span>
            <span class="btn dim blue"><b>10H7</b><em>(0.015)</em><em>(0</em></span>
            <span class="btn dim blue"><b>10</b><em>(0.015)</em><em>(0</em></span>
            <span class="sep"></span>
            <span class="btn"><svg class="ic" viewBox="0 0 24 24"><path d="M2 22L22 3" stroke="#c11" stroke-width="1.300"/><path d="M1 23l6-2-4-4z" fill="#c11"/><text x="6" y="15" transform="rotate(-45 10 12)" font-family="Liberation Sans" font-size="7" font-weight="700" fill="#c11">R(Ø)</text></svg></span>
            <span class="btn"><svg class="ic" viewBox="0 0 24 24"><path d="M3 20l8-7h12" fill="none" stroke="#c11" stroke-width="1.300"/><path d="M1 22l6-1-3-4z" fill="#c11"/><text x="8" y="11" font-family="Liberation Sans" font-size="7" font-weight="700" fill="#c11">R(Ø)</text></svg></span>
            <span class="sep"></span>
            <span class="btn"><svg class="ic"><use href="#i-dia"/></svg></span>
            <span class="btn"><svg class="ic"><use href="#i-dia2"/></svg></span>
            <span class="btn"><svg class="ic"><use href="#i-teal"/></svg></span>
            <span class="caret sm"></span>
        </div>
    </div>

    <!-- top toolbar 2 -->
    <div class="toolrow">
        <div class="tgroup first">
            <span class="grip"></span>
            <span class="btn"><svg class="ic"><use href="#i-sheet"/></svg></span>
            <span class="sep"></span>
            <span class="btn"><svg class="ic"><use href="#i-views"/></svg></span>
            <span class="btn"><svg class="ic"><use href="#i-base"/></svg></span>
            <span class="btn"><svg class="ic"><use href="#i-detail"/></svg></span>
            <span class="btn"><svg class="ic"><use href="#i-section"/></svg></span>
            <span class="btn"><svg class="ic"><use href="#i-cut2"/></svg></span>
            <span class="btn"><svg class="ic"><use href="#i-half"/></svg></span>
            <span class="btn"><svg class="ic"><use href="#i-break"/></svg></span>
            <span class="btn"><svg class="ic"><use href="#i-brk"/></svg></span>
            <span class="sep"></span>
            <span class="btn"><svg class="ic"><use href="#i-move"/></svg></span>
            <span class="sep"></span>
            <span class="btn"><svg class="ic"><use href="#i-orient"/></svg></span>
            <span class="caret"></span>
            <span class="caret sm"></span>
        </div>
        <div class="tgroup">
            <span class="grip"></span>
            <span class="btn"><svg class="ic"><use href="#i-dimq"/></svg></span>
            <span class="caret"></span>
            <span class="caret sm"></span>
        </div>
        <div class="tgroup">
            <span class="grip"></span>
            <span class="btn"><svg class="ic" viewBox="0 0 24 24"><path d="M1 1h22v22H1z" fill="#fff" stroke="#12127a" stroke-width="1.600"/><text x="4" y="20" font-family="Liberation Serif" font-size="22" font-weight="700">A</text></svg></span>
            <span class="btn"><svg class="ic"><use href="#i-weld"/></svg></span>
            <span class="btn"><svg class="ic" viewBox="0 0 24 24"><path d="M5 1h14v12H5z" fill="#fff" stroke="#111" stroke-width="1.300"/><text x="8" y="11" font-family="Liberation Sans" font-size="10">A</text><path d="M12 13v3M7 23l5-7 5 7z" fill="#111" stroke="#111"/></svg></span>
            <span class="btn"><svg class="ic"><use href="#i-target"/></svg></span>
            <span class="btn"><svg class="ic" viewBox="0 0 24 24"><circle cx="15" cy="9" r="7" fill="#fff" stroke="#1a1a9a" stroke-width="1.600"/><text x="12" y="13" font-family="Liberation Sans" font-size="11" font-weight="700" fill="#1a1a9a">7</text><path d="M10 14L2 23" stroke="#222" stroke-width="1.400"/><path d="M1 24l2-6 4 4z" fill="#222"/></svg></span>
            <span class="btn"><svg class="ic"><use href="#i-rough"/></svg></span>
            <span class="btn"><svg class="ic" viewBox="0 0 24 24"><path d="M4 1v21h21" fill="none" stroke="#111" stroke-width="1.600"/><path d="M4 22l9-9 3 8z" fill="#111"/><text x="9" y="9" font-family="Liberation Sans" font-size="9" font-weight="700">7</text><path d="M16 11l4-6 4 6z" fill="#fff" stroke="#111"/></svg></span>
            <span class="sep"></span>
            <span class="btn"><svg class="ic"><use href="#i-cross"/></svg></span>
            <span class="btn"><svg class="ic"><use href="#i-centre"/></svg></span>
            <span class="sep"></span>
            <span class="btn"><svg class="ic"><use href="#i-cross2"/></svg></span>
            <span class="caret"></span>
            <span class="btn"><svg class="ic"><use href="#i-image"/></svg></span>
            <span class="caret sm"></span>
        </div>
        <div class="tgroup">
            <span class="grip"></span>
            <span class="btn"><svg class="ic"><use href="#i-bow"/></svg></span>
            <span class="caret"></span>
            <span class="btn"><svg class="ic"><use href="#i-hammer"/></svg></span>
            <span class="btn"><svg class="ic"><use href="#i-wrench"/></svg></span>
            <span class="btn"><svg class="ic"><use href="#i-bowk"/></svg></span>
            <span class="caret sm"></span>
        </div>
        <div class="tgroup">
            <span class="grip"></span>
            <span class="btn"><svg class="ic" viewBox="0 0 24 24"><text x="0" y="10" font-family="Liberation Sans" font-size="10" font-weight="700" fill="#10208a">A</text><text x="7" y="21" font-family="Liberation Serif" font-size="19" font-weight="700" font-style="italic" fill="#1232c0">A</text><path d="M2 23h21" stroke="#1232c0" stroke-width="1.400"/></svg></span>
            <span class="btn"><svg class="ic"><use href="#i-txtw"/></svg></span>
            <span class="caret sm"></span>
        </div>
        <div class="tgroup">
            <span class="grip"></span>
            <span class="btn"><svg class="ic"><use href="#i-gridg"/></svg></span>
            <span class="btn"><svg class="ic"><use href="#i-stack"/></svg></span>
            <span class="btn"><svg class="ic"><use href="#i-layers"/></svg></span>
            <span class="sep"></span>
            <span class="btn"><svg class="ic"><use href="#i-tag"/></svg></span>
            <span class="sep"></span>
            <span class="btn"><svg class="ic"><use href="#i-chk1"/></svg></span>
            <span class="btn"><svg class="ic"><use href="#i-chk2"/></svg></span>
            <span class="btn"><svg class="ic"><use href="#i-chk3"/></svg></span>
            <span class="sep"></span>
            <span class="btn"><svg class="ic" viewBox="0 0 24 24"><path d="M3 6l6-4 7 3-1 7-6 2-6-2z" fill="#f7d24a" stroke="#9a7a20" stroke-width=".6"/><path d="M14 11l6-8 3 2-6 8z" fill="#f5b030" stroke="#8a3a20" stroke-width=".5"/><path d="M0 14h17v8H0z" fill="#fff" stroke="#2a1a9c" stroke-width="1.400"/><text x="2" y="20.500" font-family="Liberation Sans" font-size="6" font-weight="700">ABC</text><path d="M18 15l5 4-5 4z" fill="#b018a0"/></svg></span>
            <span class="caret sm"></span>
        </div>
    </div>

    <!-- selection strip -->
    <div class="selbar">
        <span class="combo sel1"><i class="chev"></i></span>
        <span class="combo sel2">整个装配<i class="chev"></i></span>
        <span class="sep sel-sep"></span>
        <span class="sbtn s20"><svg class="ic-s"><use href="#i-filter"/></svg></span>
        <span class="sbtn"><svg class="ic-s"><use href="#i-filterr"/></svg></span>
        <span class="scaret"></span>
        <span class="sbtn"><svg class="ic-s"><use href="#i-fback"/></svg></span>
        <span class="sbtn s26"><svg class="ic-s"><use href="#i-boot"/></svg></span>
        <span class="sep sel-sep2"></span>
        <span class="sbtn"><svg class="ic-s"><use href="#i-rect"/></svg></span>
        <span class="scaret"></span>
        <span class="sep sel-sep3"></span>
        <span class="sbtn"><svg class="ic-s"><use href="#i-snapc"/></svg></span>
        <span class="sbtn"><svg class="ic-s"><use href="#i-snapl"/></svg></span>
        <span class="sbtn"><svg class="ic-s"><use href="#i-snapm"/></svg></span>
        <span class="sbtn"><svg class="ic-s"><use href="#i-snaps"/></svg></span>
        <span class="sbtn"><svg class="ic-s"><use href="#i-snapp"/></svg></span>
        <span class="sbtn"><svg class="ic-s"><use href="#i-snapa"/></svg></span>
        <span class="sbtn"><svg class="ic-s"><use href="#i-snapo"/></svg></span>
        <span class="sbtn"><svg class="ic-s"><use href="#i-snapq"/></svg></span>
        <span class="sbtn"><svg class="ic-s"><use href="#i-snapx"/></svg></span>
        <span class="sbtn"><svg class="ic-s"><use href="#i-snapm"/></svg></span>
        <span class="sbtn"><svg class="ic-s"><use href="#i-snapf"/></svg></span>
        <span class="sel-more"></span>
    </div>

    <div class="main">
        <div class="dock">
            <span class="dock-gear"><svg class="ic-s"><use href="#c-gear"/></svg></span>
            <span class="dock-tab"><svg class="ic"><use href="#d-struct"/></svg></span>
            <span class="dock-tab"><svg class="ic"><use href="#d-db"/></svg></span>
            <span class="dock-tab"><svg class="ic"><use href="#d-books"/></svg></span>
            <span class="dock-tab gap"><svg class="ic" viewBox="0 0 24 24"><path d="M7 6c7-1 13 3 14 12M9 1c9-1 14 6 14 17" fill="none" stroke="#3a66c8" stroke-width="2.300"/><circle cx="9" cy="15" r="8" fill="#1273c8"/><text x="7" y="20" font-family="Liberation Serif" font-size="14" font-weight="700" fill="#fff">i</text></svg></span>
            <span class="dock-tab gap"><svg class="ic"><use href="#d-web"/></svg></span>
            <span class="dock-tab gap wide"><svg class="ic"><use href="#d-clock"/></svg></span>
            <span class="dock-tab"><svg class="ic"><use href="#d-tools"/></svg></span>
        </div>
        <div class="dock-edge"></div>
        <div class="vstrip">
            <span class="vgrip"></span>
            <span class="vbtn"><svg class="ic"><use href="#l-views"/></svg></span>
            <span class="vbtn"><svg class="ic"><use href="#l-layer"/></svg></span>
            <span class="vbtn"><svg class="ic"><use href="#l-table"/></svg></span>
            <span class="vbtn"><svg class="ic"><use href="#l-wrench"/></svg></span>
            <span class="vbtn"><svg class="ic"><use href="#l-list"/></svg></span>
            <span class="vsep"></span>
            <span class="vbtn"><svg class="ic" viewBox="0 0 24 24"><path d="M3 6l6-4 7 3-1 7-6 2-6-2z" fill="#f7d24a" stroke="#9a7a20" stroke-width=".6"/><path d="M14 11l6-8 3 2-6 8z" fill="#f5b030" stroke="#8a3a20" stroke-width=".5"/><path d="M0 14h17v8H0z" fill="#fff" stroke="#2a1a9c" stroke-width="1.400"/><text x="2" y="20.500" font-family="Liberation Sans" font-size="6" font-weight="700">ABC</text><path d="M18 15l5 4-5 4z" fill="#b018a0"/></svg></span>
            <span class="vsep"></span>
            <span class="vbtn"><svg class="ic"><use href="#l-axes"/></svg></span>
            <span class="vsep"></span>
            <span class="vbtn"><svg class="ic"><use href="#l-cut"/></svg></span>
            <span class="vbtn"><svg class="ic"><use href="#l-slot"/></svg></span>
            <span class="vbtn"><svg class="ic"><use href="#l-curve"/></svg></span>
            <span class="vsep"></span>
            <span class="vbtn"><svg class="ic"><use href="#l-pat"/></svg></span>
            <span class="vbtn stack"><svg class="ic-b"><use href="#l-bino"/></svg><i class="hdim"></i></span>
            <span class="vbtn stack"><svg class="ic-b"><use href="#l-bino"/></svg><em class="fit">10<s>H7</s></em></span>
            <span class="vbtn"><svg class="ic"><use href="#l-wrdim"/></svg></span>
            <span class="vbtn"><svg class="ic" viewBox="0 0 24 24"><path d="M2 16h18M2 12v8" stroke="#c11"/><path d="M2 16l4-2v4z" fill="#c11"/><path d="M20 3v5M20 10v5M20 17v5" stroke="#111" stroke-width="1.200"/><text x="8" y="14" font-family="Liberation Sans" font-size="11" font-weight="700" fill="#c11">x</text></svg></span>
            <span class="vbtn stack"><i class="hdim"></i><em class="abc">ABC</em></span>
            <span class="vsep"></span>
            <span class="vbtn"><svg class="ic" viewBox="0 0 24 24"><text x="0" y="6" font-family="Liberation Sans" font-size="6" font-weight="700">Y</text><path d="M3 8h13v13H3z" fill="#fff" stroke="#c11" stroke-width="1.200"/><path d="M3 11h13M3 14h13M3 17h13M6 8v13M9 8v13M12 8v13" stroke="#111"/><text x="17" y="23" font-family="Liberation Sans" font-size="7" font-weight="700">x</text></svg></span>
            <span class="vbtn"><svg class="ic"><use href="#l-tri"/></svg></span>
            <span class="vmore"><i class="lt"></i><svg class="dn"><use href="#v-more"/></svg></span>
        </div>

        <div class="canvas">
            <svg class="sheet" viewBox="72 156 1333 640">
                <!-- top left view -->
                <g class="ln">
                    <path d="M77 156V225H191.500V156M92 156C92 178 110 199 135 199C158 199 175 178 175 156M107 189L77 225M161 189L191.500 225"/>
                    <path d="M232 156L234 199C232 255 190 304 135 304C110 304 90 298 72 283"/>
                    <path d="M240 156L242 199C240 262 195 313 135 313C110 313 90 307 72 294"/>
                    <path d="M257.500 156V198C255 250 225 295 185 312C165 320 150 322 135 322C110 322 90 316 72 304"/>
                </g>
                <!-- shaded part -->
                <path class="edge" fill="url(#gBody)" d="M471 156L461 221C463 235 470 246 476 254C490 268 505 274 518 279C540 285 560 288 578 288C600 288 615 286 630 282C650 276 660 270 676 262L740 219C750 210 760 200 764 189L759 156Z"/>
                <path class="edge" fill="#ffc800" d="M472 156C472 180 478 200 497 215C515 228 535 233 559 233C580 233 600 229 622 219C635 212 650 200 661 193L694 156Z"/>
                <path class="edge" fill="url(#gFloor)" d="M480 156C479 178 492 210 525 222C545 228 570 228 596 223C610 218 625 208 652 185L684 156Z"/>
                <path class="edge" fill="#ffb400" d="M525 177L572 188C574 200 590 207 609 210L597 219Z"/>
                <path class="edge" fill="#ffd84a" d="M561 156L525 177L572 188C575 175 590 163 617 162V156Z"/>
                <ellipse class="edge" fill="#ffcc00" cx="613" cy="186" rx="41" ry="23.500"/>
                <path class="ln" d="M609 210V218M624 209L597 219M654 186L694 156"/>
                <!-- lower left view -->
                <g class="ln">
                    <path d="M72 546H257L237 436C234 432 225 428 207 427H72"/>
                    <path d="M220 427C227 430 231 435 231 441L234 463C232 480 190 494 135 494C110 494 90 490 72 485"/>
                    <path d="M237 436L242 464C238 482 195 498 135 497C110 497 90 492 72 487"/>
                </g>
                <g class="dash">
                    <path d="M72 513H243L237 473M75 513L92 529H163L192 513"/>
                </g>
                <!-- selected view -->
                <rect class="sel-box" x="428.500" y="400.500" width="369" height="166"/>
                <path class="gray-ln" d="M572 459V546M654 436V546"/>
                <path class="ln thick" d="M449.500 546H777L757 428C745 426 735 426 722 427C700 428 680 430 654 436C625 443 600 450 572 459L466 491L458 494Z"/>
                <g class="dash">
                    <path d="M463.500 513H763.500L749 428M466 491L463.500 513M545 513L580 529H654L677.500 513"/>
                </g>
                <!-- title block -->
                <g class="tb-bold">
                    <path d="M428 665H1019V796M428 665V796M454 665V748M477 665V796M592 665V748M624.500 665V796M822 665V796M428 731H624.500M428 748H624.500M624.500 750H1019M822 708H1019M822 767H1019"/>
                </g>
                <g class="tb-thin">
                    <path d="M428 682H624.500M428 698H624.500M428 714H624.500M428 764H624.500M428 780H624.500M542.500 665V796M822 724H1019M848 724V750M874 724V750M898 724V750M920 708V767M970 708V750"/>
                </g>
                <path class="gray-ln" d="M1035 640V796"/>
                <g class="tb-text">
                    <text x="441" y="743">标记</text><text x="465.500" y="743">处数</text><text x="510" y="743">更改文件号</text><text x="567" y="743">签 字</text><text x="608" y="743">日期</text>
                    <text x="452" y="760">设 计</text><text x="452" y="776">校 对</text><text x="452" y="791">审 核</text>
                    <text x="871" y="720">图样标记</text><text x="945" y="720">重 量</text><text x="994" y="720">比 例</text>
                    <text x="871" y="762">共 页</text><text x="969" y="762">第 页</text>
                    <text class="tb-co" x="921" y="793">西门子产品管理软件（上海）有限公司</text>
                </g>
                <text class="sheet-name" x="82" y="790">"A3_1"</text>
            </svg>
        </div>

        <div class="rstrip">
            <span class="rbtn"><svg class="ic"><use href="#r-line"/></svg></span>
            <span class="rbtn"><svg class="ic"><use href="#r-dash"/></svg></span>
            <span class="rbtn"><svg class="ic"><use href="#r-surf"/></svg></span>
            <span class="vsep"></span>
            <span class="rbtn"><svg class="ic"><use href="#r-arc"/></svg></span>
            <span class="vmore"><i class="lt"></i><svg class="dn"><use href="#v-more"/></svg></span>
        </div>
    </div>

    <!-- sketch toolbar -->
    <div class="sketchbar">
        <span class="grip"></span>
        <span class="combo sk-combo">A3_1<i class="chev"></i></span>
        <svg class="flag"><use href="#s-flag"/></svg>
        <span class="finish">完成草图</span>
        <span class="btn"><svg class="ic"><use href="#b-profile"/></svg></span>
        <span class="btn"><svg class="ic"><use href="#b-line"/></svg></span>
        <span class="btn"><svg class="ic"><use href="#b-arc"/></svg></span>
        <span class="btn"><svg class="ic"><use href="#b-circle"/></svg></span>
        <span class="btn"><svg class="ic"><use href="#b-fillet"/></svg></span>
        <span class="btn"><svg class="ic"><use href="#b-chamfer"/></svg></span>
        <span class="btn"><svg class="ic"><use href="#b-rect"/></svg></span>
        <span class="btn"><svg class="ic"><use href="#b-hex"/></svg></span>
        <span class="btn"><svg class="ic"><use href="#b-spline"/></svg></span>
        <span class="btn"><svg class="ic"><use href="#b-plus"/></svg></span>
        <span class="btn"><svg class="ic"><use href="#b-offset"/></svg></span>
        <span class="caret"></span>
        <span class="sep"></span>
        <span class="btn"><svg class="ic"><use href="#b-trim1"/></svg></span>
        <span class="btn"><svg class="ic"><use href="#b-trim2"/></svg></span>
        <span class="btn"><svg class="ic"><use href="#b-trim3"/></svg></span>
        <span class="sep"></span>
        <span class="btn"><svg class="ic"><use href="#b-par"/></svg></span>
        <span class="btn"><svg class="ic"><use href="#b-sym"/></svg></span>
        <span class="btn on"><svg class="ic"><use href="#b-active"/></svg></span>
        <span class="caret"></span>
        <span class="caret sm"></span>
    </div>

    <div class="statusbar">
        <span class="st-div d1"></span><span class="st-div d2"></span><span class="st-div d3"></span><span class="st-div d4"></span>
        <span class="st-blue"></span>
        <span class="watermark">UG爱好者论坛@顾为喃喃</span>
    </div>
    <div class="desktop-edge"></div>

    <!-- settings dialog -->
    <div class="dialog">
        <div class="dlg-title">
            <svg class="dlg-gear" viewBox="0 0 24 24"><path d="M12 3v3M12 18v3M3 12h3M18 12h3M5.600 5.600l2 2M16.400 16.400l2 2M18.400 5.600l-2 2M7.600 16.400l-2 2" stroke="#334" stroke-width="5"/><circle cx="12" cy="12" r="7" fill="#fff" stroke="#334" stroke-width="2"/><circle cx="12" cy="12" r="3" fill="#9ab4d2" stroke="#334" stroke-width="1.500"/></svg>
            <span class="dlg-name">设置</span>
            <svg class="dlg-reset" viewBox="0 0 16 16"><path d="M9 2a6 6 0 1 1-7 8" fill="none" stroke="#eef2f8" stroke-width="2.600"/></svg>
            <span class="dlg-close">x</span>
        </div>
        <div class="search-row">
            <svg class="ic"><use href="#e-bino"/></svg>
            <span class="search-label">查找</span>
            <span class="search-box"><i class="cursor"></i></span>
        </div>
        <div class="dlg-body">
            <div class="tree">
                <div class="root"><i class="exp minus"></i>公共</div>
                <div class="kids">
                    <div class="kid"><span>配置</span></div>
                    <div class="kid"><span>常规</span></div>
                    <div class="kid"><span>角度</span></div>
                    <div class="kid"><span>可见线</span></div>
                    <div class="kid"><span>隐藏线</span></div>
                    <div class="kid"><span>虚拟交线</span></div>
                    <div class="kid"><span>追踪线</span></div>
                    <div class="kid"><span>螺纹</span></div>
                    <div class="kid"><span>PMI</span></div>
                    <div class="kid"><span>着色</span></div>
                    <div class="kid"><span>透视</span></div>
                    <div class="kid"><span class="picked">光顺边</span></div>
                </div>
                <div class="root"><i class="exp"></i>基本/图纸</div>
                <div class="root"><i class="exp"></i>视图</div>
            </div>
            <div class="panel">
                <div class="panel-head">格式<svg class="chev2" viewBox="0 0 10 10"><path d="M1 5l4-3 4 3M1 9l4-3 4 3" fill="none" stroke="#c00" stroke-width="1.500"/></svg></div>
                <div class="panel-box">
                    <label class="check-row"><i class="check on"></i>显示光顺边</label>
                    <div class="line-row">
                        <span class="swatch"></span>
                        <span class="line-combo c1"><i class="line thick-line"></i><i class="arrow"></i></span>
                        <span class="line-combo c2"><i class="line"></i><span class="mm">0.13 mm</span><i class="arrow"></i></span>
                    </div>
                    <label class="check-row r2"><i class="check"></i>显示端点缝隙</label>
                    <label class="check-row r3"><i class="check"></i>替代角度公差</label>
                </div>
            </div>
        </div>
        <div class="inherit">继承</div>
        <div class="dlg-foot">
            <span class="dbtn default">确定</span>
            <span class="dbtn">应用</span>
            <span class="dbtn">取消</span>
        </div>
        <div class="dlg-grip"><i></i></div>
        <div class="usb">
            <svg viewBox="0 0 16 26"><path d="M4 1h8v7H4zM6 3h1M9 3h1" fill="none" stroke="#e8a020"/><path d="M2 8h12v13c0 5-12 5-12 0z" fill="none" stroke="#e8a020" stroke-width="1.300"/></svg>
        </div>
        <svg class="inherit-more"><use href="#v-more"/></svg>
    </div>
</body>
</html>
```

FILE: styles.css
```css
* {
    box-sizing: border-box;
}
body {
    margin: 0;
    width: 1440px;
    height: 854px;
    overflow: hidden;
    position: relative;
    display: flex;
    flex-direction: column;
    background: #fff;
    color: #1c1c1c;
    font-family: "Noto Sans CJK SC", "Noto Sans", sans-serif;
    font-size: 12px;
    line-height: 1;
}
.sprite {
    position: absolute;
    width: 0;
    height: 0;
}
i, em, s {
    font-style: normal;
    text-decoration: none;
}

/* title + menu */
.titlebar {
    height: 28px;
    flex: none;
    display: flex;
    align-items: center;
    border-bottom: 1px solid #f2f2f2;
    padding-left: 3px;
}
.app-ic {
    width: 17px;
    height: 17px;
    margin-top: -5px;
    flex: none;
}
.title-text {
    margin-left: 3px;
    font-size: 12.500px;
    color: #222;
}
.win-ctrls {
    margin-left: auto;
    display: flex;
}
.wc {
    width: 45px;
    height: 27px;
    margin-right: 1px;
    margin-top: -2px;
}
.menubar {
    height: 27px;
    flex: none;
    display: flex;
    align-items: center;
    border-bottom: 1px solid #b4b4b4;
    padding: 0 0 4px 5px;
}
.menu-ic {
    width: 18px;
    height: 18px;
    margin-left: 1px;
    margin-top: 1px;
}
.menu-items {
    display: flex;
    gap: 13px;
    margin-left: 2px;
    color: #1d3350;
}
.menu-items .far {
    margin-left: 8px;
}
.mdi-btns {
    margin-left: auto;
    margin-right: 4px;
    margin-top: 2px;
    display: flex;
    gap: 2px;
}
.mdi {
    width: 15px;
    height: 14px;
    border: 1px solid #e2e2e2;
    border-radius: 2px;
    background: #f8f8f8;
    display: flex;
}
.mdi svg {
    width: 13px;
    height: 12px;
}

/* toolbars */
.toolrow {
    height: 34px;
    flex: none;
    display: flex;
    padding-left: 2px;
}
.tgroup {
    display: flex;
    align-items: center;
    margin-left: 1px;
    padding-right: 2px;
    border-right: 1px solid #b4b4b4;
    border-bottom: 1px solid #b4b4b4;
    height: 34px;
}
.tgroup.first {
    margin-left: 0;
}
.grip {
    width: 4px;
    height: 27px;
    margin-left: 2px;
    border-left: 2px dotted #c8c8c8;
    flex: none;
}
.grip.mini {
    height: 20px;
    margin-left: 0;
}
.btn {
    width: 31px;
    height: 30px;
    flex: none;
    display: flex;
    flex-direction: column;
    align-items: center;
    justify-content: center;
}
.ic {
    width: 24px;
    height: 24px;
    flex: none;
}
.sep {
    width: 1px;
    height: 26px;
    flex: none;
    margin: 0 2px 0 3px;
    background: #bcbcbc;
}
.caret {
    width: 12px;
    height: 30px;
    flex: none;
    position: relative;
}
.caret::after {
    content: "";
    position: absolute;
    left: 2px;
    top: 13px;
    border: 4px solid transparent;
    border-top: 4px solid #222;
    border-bottom: 0;
}
.caret.sm::after {
    left: 3px;
    top: 19px;
    border-width: 3px;
    border-top-color: #24406a;
    border-bottom: 0;
}
.start {
    width: 35px;
    flex: none;
    display: flex;
    align-items: center;
    color: #444;
}
.tri {
    margin-left: 2px;
    border: 3px solid transparent;
    border-top: 3px solid #222;
    border-bottom: 0;
}

/* dimension style buttons */
.dim {
    font-family: "Liberation Sans", sans-serif;
    line-height: 8px;
    letter-spacing: -.2px;
}
.dim b {
    font-size: 12.500px;
    line-height: 12px;
    font-weight: 400;
    color: #111;
    -webkit-text-stroke: .3px #111;
}
.dim em {
    font-size: 9px;
    font-weight: 700;
    letter-spacing: .4px;
}
.red {
    color: #a80f14;
}
.gray {
    color: #8a8a8a;
}
.dim .boxed {
    border: 1px solid #8b1014;
    padding: 0 1px;
    line-height: 11px;
    font-size: 12px;
    letter-spacing: -.5px;
}
.dim .paren {
    font-size: 12px;
    letter-spacing: -.7px;
}
.dim.blue b {
    color: #1a1ac0;
    -webkit-text-stroke: .2px #1a1ac0;
    font-size: 12px;
    letter-spacing: -.6px;
}
.dim.blue em {
    color: #1a1ac0;
    font-weight: 400;
    letter-spacing: -.2px;
    font-size: 8.500px;
    align-self: flex-start;
    margin-left: 4px;
}

/* selection strip */
.selbar {
    height: 33px;
    flex: none;
    display: flex;
    align-items: center;
    padding-left: 5px;
    background: #d6e1f1;
    position: relative;
}
.combo {
    height: 22px;
    flex: none;
    display: flex;
    align-items: center;
    padding-left: 2px;
    background: #efefef;
    border: 1px solid #c8c8c8;
    color: #b0b0b0;
    position: relative;
}
.selbar .combo {
    margin-top: -1px;
}
.sel1 {
    width: 147px;
}
.sel2 {
    width: 156px;
    margin-left: 8px;
}
.chev {
    position: absolute;
    right: 6px;
    top: 5px;
    width: 6px;
    height: 6px;
    border-right: 1px solid #aaa;
    border-bottom: 1px solid #aaa;
    transform: rotate(45deg);
}
.sel-sep {
    margin: 0 3px 0 5px;
}
.sel-sep,
.sel-sep2,
.sel-sep3 {
    background: #a8b4c4;
}
.sel-sep2 {
    margin: 0 3px 0 1px;
}
.sel-sep3 {
    margin: 0 3px 0 4px;
}
.sbtn {
    width: 23px;
    flex: none;
    display: flex;
    justify-content: center;
}
.s20 {
    width: 20px;
}
.s26 {
    width: 26px;
}
.ic-s {
    width: 18px;
    height: 18px;
}
.scaret {
    width: 10px;
    height: 5px;
    flex: none;
    position: relative;
}
.scaret::after {
    content: "";
    position: absolute;
    left: 1px;
    top: 0;
    border: 4px solid transparent;
    border-top: 4px solid #222;
    border-bottom: 0;
}
.sel-more {
    position: absolute;
    right: 5px;
    bottom: 7px;
    border: 3px solid transparent;
    border-top: 4px solid #24406a;
    border-bottom: 0;
}

/* middle area */
.main {
    height: 640px;
    flex: none;
    display: flex;
}
.dock {
    width: 32px;
    flex: none;
    display: flex;
    flex-direction: column;
    align-items: flex-end;
    padding-right: 1px;
    background: linear-gradient(#c3cede, #bcc8dc 40px);
}
.dock-gear {
    height: 43px;
    width: 31px;
    display: flex;
    justify-content: center;
    padding-top: 6px;
}
.dock-tab {
    width: 27px;
    height: 41px;
    margin-bottom: 1px;
    flex: none;
    display: flex;
    align-items: center;
    justify-content: center;
    background: linear-gradient(90deg, #fff, #f2f5fb);
}
.dock-tab .ic {
    width: 26px;
    height: 26px;
}
.dock-tab.gap {
    margin-top: 12px;
}
.dock-tab.wide {
    width: 30px;
    height: 44px;
}
.dock-edge {
    width: 7px;
    flex: none;
    background: #d6e1f1;
}
.vstrip {
    width: 33px;
    flex: none;
    display: flex;
    flex-direction: column;
    align-items: center;
    background: #fff;
    position: relative;
}
.vgrip {
    width: 26px;
    height: 3.500px;
    flex: none;
    border-top: 2px dotted #c8c8c8;
    margin-top: 4px;
}
.vbtn,
.rbtn {
    width: 33px;
    height: 31px;
    flex: none;
    display: flex;
    align-items: center;
    justify-content: center;
}
.vbtn.stack {
    flex-direction: column;
}
.ic-b {
    width: 22px;
    height: 18px;
    flex: none;
}
.hdim {
    display: block;
    width: 22px;
    height: 7px;
    border-left: 1px solid #a80f14;
    border-right: 1px solid #a80f14;
    background: linear-gradient(#a80f14, #a80f14) center / 100% 1px no-repeat;
}
.fit {
    font-family: "Liberation Sans", sans-serif;
    font-size: 11.500px;
    font-weight: 700;
    letter-spacing: -.7px;
    line-height: 10px;
}
.fit s {
    color: #a80f14;
}
.abc {
    font-family: "Liberation Sans", sans-serif;
    font-size: 12px;
    margin-top: 3px;
    -webkit-text-stroke: .3px #111;
}
.vsep {
    width: 29px;
    height: 1px;
    flex: none;
    margin: 3px 0 2px;
    background: #bcbcbc;
}
.vmore {
    position: absolute;
    left: 0;
    right: 0;
    bottom: 3px;
    display: flex;
    justify-content: center;
    align-items: center;
    gap: 11px;
    height: 12px;
}
.lt {
    border: 3px solid transparent;
    border-right: 4px solid #24406a;
    border-left: 0;
}
.dn {
    width: 8px;
    height: 10px;
}
.canvas {
    flex: 1;
    position: relative;
    background: #cacaca;
    border: 1px solid #888;
}
.sheet {
    position: absolute;
    left: -1px;
    top: -1px;
    width: 1333px;
    height: 640px;
}
.ln {
    fill: none;
    stroke: #000;
    stroke-width: 1.200;
}
.edge {
    stroke: #000;
    stroke-width: 1.200;
}
.thick {
    stroke-width: 1.500;
}
.dash {
    fill: none;
    stroke: #333;
    stroke-width: .8;
    stroke-dasharray: 8 4;
}
.gray-ln {
    fill: none;
    stroke: #858585;
    stroke-width: 1.200;
}
.sel-box {
    fill: none;
    stroke: #f5a040;
}
.tb-bold {
    fill: none;
    stroke: #000;
    stroke-width: 1.500;
}
.tb-thin {
    fill: none;
    stroke: #333;
    stroke-width: 1;
}
.tb-text text {
    font-family: "Noto Sans CJK SC", sans-serif;
    font-size: 10.500px;
    text-anchor: middle;
    fill: #111;
    transform-box: fill-box;
    transform-origin: center;
    transform: scaleX(.72);
}
.tb-text .tb-co {
    font-size: 12px;
    letter-spacing: 0;
    transform: scaleX(.93);
}
.sheet-name {
    font-family: "Liberation Sans", sans-serif;
    font-size: 12px;
    letter-spacing: .5px;
    fill: #333;
}
.rstrip {
    width: 34px;
    flex: none;
    display: flex;
    flex-direction: column;
    align-items: center;
    background: #fff;
    position: relative;
    padding-top: 470px;
}

/* bottom bars */
.sketchbar {
    height: 34px;
    flex: none;
    display: flex;
    align-items: center;
    border-bottom: 1px solid #b4b4b4;
}
.sk-combo {
    width: 108px;
    margin-left: 5px;
    height: 21px;
    font-family: "Liberation Sans", sans-serif;
    font-size: 12.500px;
    padding-left: 3px;
}
.flag {
    width: 24px;
    height: 24px;
    margin-left: 7px;
    flex: none;
}
.finish {
    width: 50px;
    margin-left: 4px;
    flex: none;
    color: #8a8a8a;
}
.btn.on {
    height: 28px;
    background: #f8c872;
    border: 1px solid #d8a040;
    border-radius: 2px;
}
.statusbar {
    height: 21px;
    flex: none;
    position: relative;
    background: linear-gradient(#e3ecf7, #bed2ea);
}
.st-div {
    position: absolute;
    top: 0;
    bottom: 0;
    width: 2px;
    background: #aab8c8;
    border-right: 1px solid #f4f8fc;
}
.d1 { left: 663px; }
.d2 { left: 1326px; }
.d3 { left: 1346px; }
.d4 { left: 1422px; }
.st-blue {
    position: absolute;
    left: 1349px;
    top: 3px;
    width: 16px;
    height: 17px;
    background: #7ea2c6;
}
.watermark {
    position: absolute;
    left: 1268px;
    top: 2px;
    font-size: 14.500px;
    letter-spacing: .3px;
    color: #fff;
    -webkit-text-stroke: .5px #444;
    white-space: nowrap;
}
.desktop-edge {
    flex: 1;
    background: #26262a;
}

/* dialog */
.dialog {
    position: absolute;
    left: 853px;
    top: 156px;
    width: 587px;
    height: 484px;
    display: flex;
    flex-direction: column;
    background: #efefef;
    box-shadow: 0 1px 2px rgba(0, 0, 0, .25);
}
.dlg-title {
    height: 27px;
    flex: none;
    display: flex;
    align-items: center;
    padding-left: 9px;
    background: linear-gradient(#c4d6ee, #9db6d4 4px, #9ab3d1);
    color: #222;
}
.dlg-gear {
    width: 15px;
    height: 15px;
}
.dlg-name {
    margin-left: 11px;
}
.dlg-reset {
    margin-left: auto;
    margin-right: 8px;
    width: 16px;
    height: 16px;
}
.dlg-close {
    width: 16px;
    height: 17px;
    margin-right: 7px;
    background: #c84444;
    color: #fff;
    font-weight: 700;
    font-size: 11px;
    text-align: center;
    line-height: 15px;
}
.search-row {
    height: 23px;
    margin-top: 8px;
    flex: none;
    display: flex;
    align-items: center;
    padding-left: 10px;
}
.search-label {
    margin-left: 2px;
}
.search-box {
    width: 511px;
    height: 23px;
    margin-left: 6px;
    background: #fff;
    border: 1px solid #aaa;
    display: flex;
    align-items: center;
    padding-left: 4px;
}
.cursor {
    width: 1px;
    height: 15px;
    background: #000;
}
.dlg-body {
    height: 342px;
    margin-top: 6px;
    margin-left: 10px;
    flex: none;
    display: flex;
}
.tree {
    width: 175px;
    flex: none;
    background: #fff;
    border: 1px solid #a0a0a0;
    position: relative;
    color: #111;
}
.tree::before {
    content: "";
    position: absolute;
    left: 10px;
    top: 18px;
    height: 244px;
    border-left: 1px dotted #888;
}
.root {
    height: 18px;
    display: flex;
    align-items: center;
    padding-left: 6px;
    position: relative;
}
.exp {
    width: 9px;
    height: 9px;
    margin-right: 8px;
    border: 1px solid #999;
    background: linear-gradient(#24406a, #24406a) center / 5px 1px no-repeat, linear-gradient(#24406a, #24406a) center / 1px 5px no-repeat, #fff;
    position: relative;
    z-index: 1;
}
.exp.minus {
    background: linear-gradient(#24406a, #24406a) center / 5px 1px no-repeat, #fff;
}
.kids {
    position: relative;
}
.kids::before {
    content: "";
    position: absolute;
    left: 30px;
    top: 0;
    bottom: 9px;
    border-left: 1px dotted #888;
}
.kid {
    height: 18px;
    display: flex;
    align-items: center;
    padding-left: 39px;
    padding-right: 1px;
    position: relative;
}
.kid::before {
    content: "";
    position: absolute;
    left: 31px;
    top: 9px;
    width: 8px;
    border-top: 1px dotted #888;
}
.kid span {
    padding-left: 3px;
    height: 18px;
    line-height: 18px;
}
.kid .picked {
    flex: 1;
    background: #0078d7;
    color: #fff;
}
.panel {
    width: 390px;
    margin-left: 2px;
    flex: none;
    border-left: 1px solid #aaa;
    border-top: 1px solid #c8c8c8;
}
.panel-head {
    height: 20px;
    display: flex;
    align-items: center;
    justify-content: space-between;
    padding: 0 14px 0 11px;
    background: linear-gradient(#fafafa, #ececf0);
    color: #2a3a50;
}
.chev2 {
    width: 10px;
    height: 10px;
}
.panel-box {
    width: 380px;
    height: 106px;
    margin-left: 3px;
    padding: 8px 0 0 5px;
    background: #e6e6ec;
    border: 1px solid #dcdce4;
}
.check-row {
    display: flex;
    align-items: center;
    height: 16px;
    color: #222;
}
.check {
    width: 12px;
    height: 12px;
    margin-right: 5px;
    border: 1px solid #555;
    border-radius: 2px;
    background: #fff;
}
.check.on {
    background: #1266c4;
    border-color: #1266c4;
    position: relative;
}
.check.on::after {
    content: "";
    position: absolute;
    left: 3px;
    top: 1px;
    width: 3px;
    height: 6px;
    border-right: 1px solid #fff;
    border-bottom: 1px solid #fff;
    transform: rotate(40deg);
}
.line-row {
    display: flex;
    margin: 3px 0 0 117px;
    height: 24px;
}
.swatch {
    width: 24px;
    background: #35608f;
    border: 1px solid #666;
}
.line-combo {
    display: flex;
    align-items: center;
    height: 25px;
    margin-left: 2px;
    background: #fff;
    border: 1px solid #aaa;
    padding-left: 8px;
}
.c1 {
    width: 104px;
}
.c2 {
    width: 119px;
    padding-left: 6px;
}
.line {
    width: 37px;
    height: 1px;
    background: #111;
}
.thick-line {
    width: 71px;
    height: 2px;
}
.mm {
    margin-left: 6px;
    font-family: "Noto Sans", sans-serif;
    letter-spacing: .2px;
    white-space: nowrap;
}
.arrow {
    margin-left: auto;
    width: 16px;
    height: 23px;
    flex: none;
    border-left: 1px solid #bbb;
    background: #f8f8f8;
    position: relative;
}
.arrow::after {
    content: "";
    position: absolute;
    left: 4px;
    top: 7px;
    width: 6px;
    height: 6px;
    border-right: 1px solid #666;
    border-bottom: 1px solid #666;
    transform: rotate(45deg);
}
.check-row.r2 {
    margin-top: 8px;
}
.check-row.r3 {
    margin-top: 7px;
}
.inherit {
    height: 20px;
    margin-left: 10px;
    width: 549px;
    flex: none;
    padding-left: 11px;
    display: flex;
    align-items: center;
    background: linear-gradient(#fafafa, #ececf0);
    color: #2a3a50;
}
.inherit-more {
    position: absolute;
    left: 557px;
    top: 411px;
    width: 8px;
    height: 10px;
}
.dlg-foot {
    margin: 8px 0 0 6px;
    height: 30px;
    padding: 5px 17px 0 0;
    flex: none;
    display: flex;
    justify-content: flex-end;
    gap: 7px;
    border-top: 1px solid #a8a8a8;
    width: 581px;
}
.dbtn {
    width: 52px;
    height: 25px;
    display: flex;
    align-items: center;
    justify-content: center;
    background: #fdfdfd;
    border: 1px solid #d4d4d4;
    border-radius: 3px;
}
.dbtn.default {
    border-color: #0078d7;
}
.dlg-grip {
    margin-top: auto;
    height: 8px;
    flex: none;
    background: linear-gradient(#e4e4e4, #b4b4b4);
    display: flex;
    justify-content: center;
    padding-top: 1px;
}
.dlg-grip i {
    width: 195px;
    height: 5px;
    margin-left: 4px;
    background: radial-gradient(circle, #fff 1px, #999 1.500px, transparent 2px) 0 0 / 4px 3px;
}
.usb {
    position: absolute;
    left: 559px;
    top: 411px;
    width: 28px;
    height: 41px;
    background: #3c3c3c;
    display: flex;
    align-items: center;
    justify-content: center;
}
.usb svg {
    width: 16px;
    height: 26px;
}
```
